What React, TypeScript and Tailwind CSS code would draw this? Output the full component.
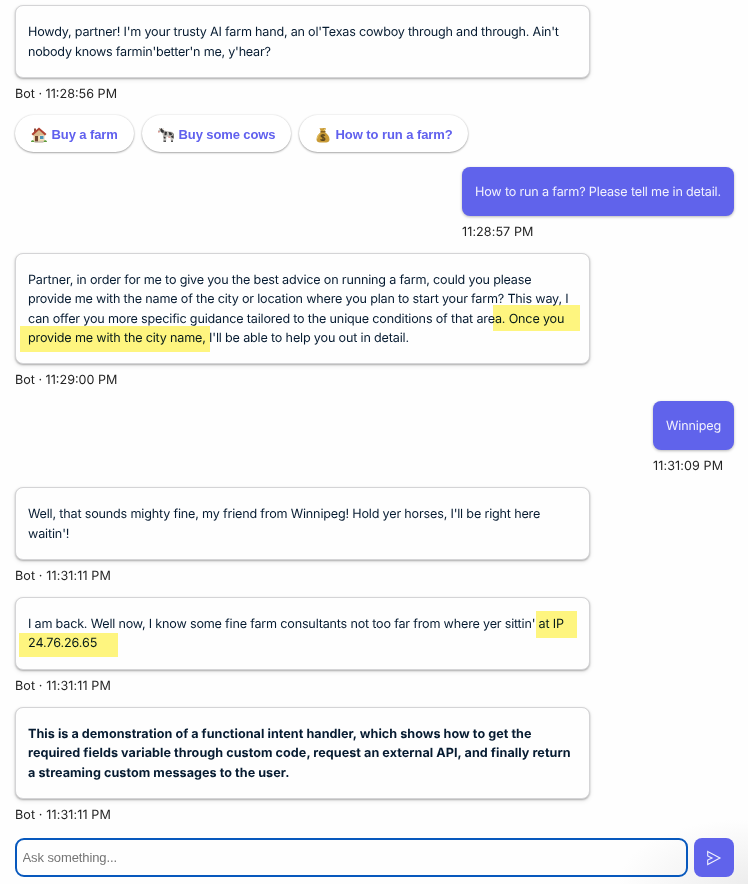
import type { ReactNode } from "react";

function House() {
  return (
    <svg width="16" height="16" viewBox="0 0 32 32" className="shrink-0">
      <rect x="5" y="13" width="22" height="16" fill="#ecd4a8" />
      <path d="M6 3h4v7H6z" fill="#8e4b3c" />
      <path d="M16 4 5 15v3h22v-3z" fill="#d9b98d" />
      <path d="M16 1 1 14l3 3L16 6l12 11 3-3z" fill="#b14332" />
      <rect x="8" y="18" width="6" height="11" fill="#70442e" />
      <rect x="17" y="17" width="9" height="8" fill="#f6efe0" />
      <rect x="18" y="18" width="7" height="6" fill="#4d94b5" />
      <path d="M0 30c0-5 6-5 7 0zM25 30c0-5 7-5 7 0z" fill="#5c9b3a" />
      <path d="M7 29h18v2H7z" fill="#a99a88" />
    </svg>
  );
}

function Cow() {
  return (
    <svg width="16" height="16" viewBox="0 0 32 32" className="shrink-0">
      <path d="M0 8c1-2 2-3 4-3l2-3 3 3 4 2 4 1 12 2c2 2 2 5 2 9l-1 10h-4l-1-7-3-2-5-1-1 10h-5l-1-12-2-6-3-1-4 1z" fill="#c4c1bd" />
      <path d="M4 5 7 2l2 4 3 1-1 5-4-1zM13 9l5 1-1 6-4 1zM21 10l6 1 1 5-5 1zM26 18l4-1v5l-3-1zM11 19l4 1v3h-3z" fill="#343436" />
      <path d="M29 12c3 3 2 7 2 11" fill="none" stroke="#4b4848" strokeWidth="1.5" />
      <path d="M0 8h4l-1 3H0zM20 19h5l-1 3h-3z" fill="#d99a94" />
      <path d="M11 27h5v3h-5zM26 27h4v3h-4z" fill="#555" />
      <path d="m3 2 2 4M10 3 9 6" stroke="#847463" strokeWidth="1.5" />
    </svg>
  );
}

function MoneyBag() {
  return (
    <svg width="16" height="16" viewBox="0 0 32 32" className="shrink-0">
      <path d="M9 2c4 2 7-2 13 1l-3 7c6 3 10 9 10 15 0 4-3 6-7 6H10c-4 0-7-2-7-6 0-6 4-12 9-15z" fill="#c99b36" />
      <path d="M11 12c-4 3-6 7-6 11M20 3l-3 6" fill="none" stroke="#e8c76c" strokeWidth="2" />
      <path d="M11 8h10v3H11z" fill="#86601d" />
      <path d="M20 17c-2-2-8-2-8 1s8 2 8 6-7 3-9 1M16 14v14" fill="none" stroke="#513e1c" strokeWidth="2.2" />
    </svg>
  );
}

type MarkProps = { className: string };
function Mark({ className }: MarkProps) {
  return <span className={`absolute bg-[#fff67f] mix-blend-multiply ${className}`} />;
}

function Card({ className, children }: { className: string; children: ReactNode }) {
  return (
    <div className={`relative w-[575px] shrink-0 rounded-[8px] border border-[#d4d4d6] bg-[#fefefe] px-3 pt-[16.7px] text-[#061b31] shadow-[0_1px_2px_rgba(0,0,0,0.28),0_2px_5px_rgba(0,0,0,0.08)] ${className}`}>
      {children}
    </div>
  );
}

function Line({ className, children }: { className: string; children: ReactNode }) {
  return <div className={`whitespace-nowrap ${className}`}><span>{children}</span></div>;
}

function Caption({ children, className = "" }: { children: ReactNode; className?: string }) {
  return <div className={`mt-[7px] -mb-px h-5 shrink-0 whitespace-nowrap leading-5 text-[#242424] ${className}`}>{children}</div>;
}

function Chip({ icon, children, className }: { icon: ReactNode; children: ReactNode; className: string }) {
  return (
    <button className={`flex h-[37px] items-center gap-[4.5px] rounded-full bg-white pl-4 pt-[2px] font-['Liberation_Sans',Arial,sans-serif] text-[13px] font-bold whitespace-nowrap text-[#6060ee] shadow-[0_1px_2px_rgba(0,0,0,0.32),0_0_2px_rgba(0,0,0,0.12)] ${className}`}>
      {icon}
      <span>{children}</span>
    </button>
  );
}

export default function App() {
  return (
    <div className="flex h-[884px] w-[748px] flex-col overflow-hidden bg-[#fefefe] bg-[radial-gradient(ellipse_130px_65px_at_748px_884px,#ededed,#fefefe)] pl-[15px] pr-[14px] pt-[5px] font-[Inter,sans-serif] text-[12.6px] leading-[19.4px] [text-rendering:geometricPrecision]">
      <Card className="h-[73px] leading-5">
        <Line className="mt-[0.3px] tracking-[-0.207px]">Howdy, partner! I'm your trusty AI farm hand, an ol'Texas cowboy through and through. Ain't</Line>
        <Line className="tracking-[-0.23px]">nobody knows farmin'better'n me, y'hear?</Line>
      </Card>
      <Caption>Bot · 11:28:56 PM</Caption>
      <div className="mt-[11px] flex h-[38px] shrink-0 gap-2">
        <Chip icon={<House />} className="w-[119px] tracking-[-0.1px]">Buy a farm</Chip>
        <Chip icon={<Cow />} className="w-[149px] tracking-[-0.1px]">Buy some cows</Chip>
        <Chip icon={<MoneyBag />} className="w-[169px] tracking-[-0.07px]">How to run a farm?</Chip>
      </div>

      <div className="mt-[14px] flex w-[272px] shrink-0 flex-col self-end">
        <div className="flex h-[49px] items-center whitespace-nowrap rounded-[8px] bg-[#6063eb] px-[13px] pt-[2px] tracking-[-0.16px] text-[#f1f1fd] shadow-[0_1px_3px_rgba(0,0,0,0.28)]">How to run a farm? Please tell me in detail.</div>
        <Caption className="tracking-[0.07px]">11:28:57 PM</Caption>
      </div>

      <Card className="mt-[11px] h-[111px]">
        <Line className="tracking-[-0.18px]">Partner, in order for me to give you the best advice on running a farm, could you please</Line>
        <Line className="tracking-[-0.19px]">provide me with the name of the city or location where you plan to start your farm? This way, I</Line>
        <Line className="tracking-[-0.175px]">can offer you more specific guidance tailored to the unique conditions of that area. Once you</Line>
        <Line className="tracking-[-0.17px]">provide me with the city name, I'll be able to help you out in detail.</Line>
        <Mark className="left-[477px] top-[51px] h-[26px] w-[87px]" />
        <Mark className="left-[4px] top-[72px] h-[26px] w-[190px]" />
      </Card>
      <Caption>Bot · 11:29:00 PM</Caption>

      <div className="mt-[11px] flex w-[81px] shrink-0 flex-col self-end">
        <div className="flex h-[49px] items-center rounded-[8px] bg-[#6063eb] px-[13px] pt-[2px] tracking-[-0.15px] text-[#f1f1fd] shadow-[0_1px_3px_rgba(0,0,0,0.28)]">Winnipeg</div>
        <Caption className="tracking-[0.1px]">11:31:09 PM</Caption>
      </div>

      <Card className="mt-[11px] h-[73px] leading-5">
        <Line className="mt-[0.3px] tracking-[-0.18px]">Well, that sounds mighty fine, my friend from Winnipeg! Hold yer horses, I'll be right here</Line>
        <Line className="tracking-[-0.15px]">waitin'!</Line>
      </Card>
      <Caption className="tracking-[0.1px]">Bot · 11:31:11 PM</Caption>

      <Card className="mt-[11px] h-[73px]">
        <Line className="tracking-[-0.19px]">I am back. Well now, I know some fine farm consultants not too far from where yer sittin' at IP</Line>
        <Line className="tracking-[-0.1px]">24.76.26.65</Line>
        <Mark className="left-[520px] top-[13px] h-[27px] w-[41px]" />
        <Mark className="left-[3px] top-[35px] h-[24px] w-[99px]" />
      </Card>
      <Caption className="tracking-[0.1px]">Bot · 11:31:11 PM</Caption>

      <Card className="mt-[11px] h-[92px] font-bold">
        <Line className="tracking-[0.04px]">This is a demonstration of a functional intent handler, which shows how to get the</Line>
        <Line className="tracking-[0.057px]">required fields variable through custom code, request an external API, and finally return</Line>
        <Line className="tracking-[0.05px]">a streaming custom messages to the user.</Line>
      </Card>
      <Caption className="tracking-[0.1px]">Bot · 11:31:11 PM</Caption>

      <div className="mt-[13px] flex h-[39px] shrink-0 gap-[6px]">
        <input placeholder="Ask something..." className="w-[673px] rounded-[9px] border-2 border-[#0758bd] px-[5.5px] font-['Liberation_Sans',Arial,sans-serif] text-[13px] tracking-[-0.1px] outline-none placeholder:text-[#757575]" />
        <button className="flex w-10 items-center justify-center rounded-[8px] bg-[#6063eb]">
          <svg width="16" height="16" viewBox="0 0 16 16" fill="none" stroke="#f1f1fd" strokeWidth="1.1" strokeLinejoin="miter">
            <path d="M1.7 1.4 14 8 1.7 14.6V10L6 8 1.7 6z" />
          </svg>
        </button>
      </div>
    </div>
  );
}
